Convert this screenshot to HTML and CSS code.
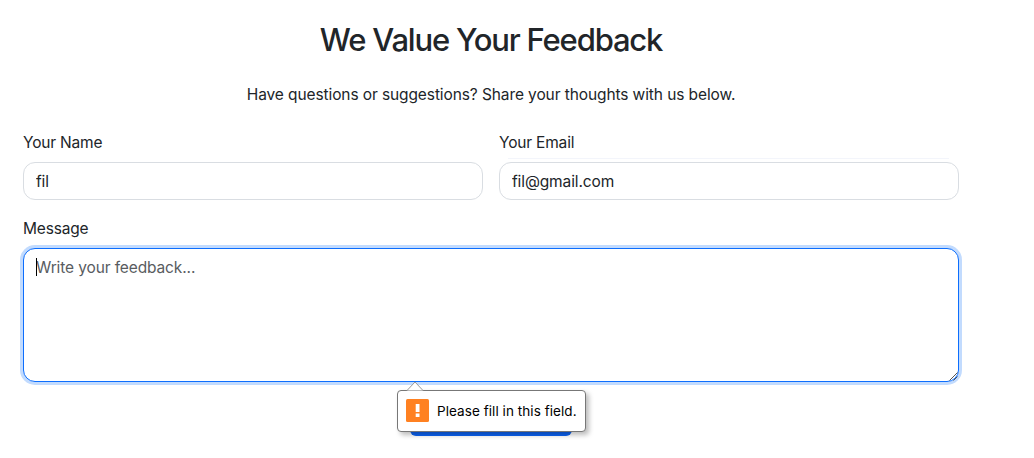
FILE: index.html
```html
<!DOCTYPE html>
<html lang="en">
<head>
<meta charset="utf-8">
<title>Feedback</title>
<link rel="stylesheet" href="styles.css">
</head>
<body>
<section class="feedback">
  <h2 class="title">We Value Your Feedback</h2>
  <p class="lead">Have questions or suggestions? Share your thoughts with us below.</p>
  <form class="form">
    <div class="row">
      <div class="field">
        <label class="label" for="name">Your Name</label>
        <input class="control" id="name" type="text" value="fil">
      </div>
      <div class="field field-email">
        <label class="label" for="email">Your Email</label>
        <input class="control" id="email" type="email" value="fil@gmail.com">
      </div>
    </div>
    <div class="field message">
      <label class="label" for="message">Message</label>
      <div class="area-wrap">
        <textarea class="control area" id="message" placeholder="Write your feedback..."></textarea>
        <span class="caret"></span>
        <svg class="grip" viewBox="0 0 9 9"><path d="M0.500 8.500 8.500 .5M4.500 8.500l4-4" /></svg>
      </div>
    </div>
    <div class="actions">
      <button class="submit" type="submit" aria-label="Submit"></button>
      <div class="bubble">
        <svg class="pointer" viewBox="0 0 18 10"><path d="M1 9.500 9 1l8 8.500" /></svg>
        <svg class="warn" viewBox="0 0 23 23"><rect width="23" height="23" rx="1.500" fill="#ff8121"/><path d="M9.700 5h3.800v8H9.700zM9.700 14.500h3.800v3.500H9.700z" fill="#fff"/></svg>
        <span class="bubble-text">Please fill in this field.</span>
      </div>
    </div>
  </form>
</section>
</body>
</html>
```
FILE: styles.css
```css
* { box-sizing: border-box; }
body { margin: 0; min-height: 100vh; display: flow-root; background: #fff; color: #212529; font: 15.5px/24px Inter, sans-serif; }
.feedback { width: 936px; margin: 21px 0 0 23px; }
.title { margin: 0; font-size: 31px; line-height: 38px; font-weight: 500; text-align: center; letter-spacing: -1.18px; }
.lead { margin: 24px 0 23px; text-align: center; letter-spacing: -0.1px; }
.row { display: grid; grid-template-columns: 1fr 1fr; gap: 16px; }
.field { display: flex; flex-direction: column; position: relative; }
.field-email::before { content: ""; position: absolute; left: 9px; right: 10px; top: 28px; height: 1px; background: #f3f5fb; }
.label { display: block; align-self: flex-start; padding-top: 1px; margin-bottom: 7px; letter-spacing: -0.18px; }
.control { display: block; width: 100%; height: 38px; padding: 6px 12px; border: 1px solid #d9dde2; border-radius: 12px; background: #fff; color: #212529; font: inherit; letter-spacing: -0.12px; outline: 0; }
.message { margin-top: 16px; }
.area-wrap { position: relative; }
.area { height: 134px; padding-top: 7px; resize: none; border-color: #0d6efd; box-shadow: 0 0 0 3px #c2dbfe; }
.area::placeholder { color: #595c5f; opacity: 1; }
.caret { position: absolute; left: 13px; top: 10px; width: 1px; height: 18px; background: #000; }
.grip { position: absolute; right: 1px; bottom: 1px; width: 9px; height: 9px; fill: none; stroke: #555; stroke-width: 1; }
.actions { display: flex; justify-content: center; position: relative; margin-top: 16px; }
.submit { width: 162px; height: 38px; border: 0; border-radius: 6px; background: #0d63f3; }
.bubble { position: absolute; left: 374px; top: -8px; width: 189px; height: 42px; display: flex; align-items: center; gap: 8px; padding: 0 8px; border: 1px solid #777; border-radius: 4px; background: #fff; color: #000; box-shadow: 3px 3px 5px #0004; }
.pointer { position: absolute; left: 8px; top: -10px; width: 18px; height: 10px; fill: #fff; stroke: #999; }
.warn { width: 23px; height: 23px; flex: none; margin-top: -1px; }
.bubble-text { font-size: 13.5px; line-height: 18px; letter-spacing: 0.06px; white-space: nowrap; }
```
